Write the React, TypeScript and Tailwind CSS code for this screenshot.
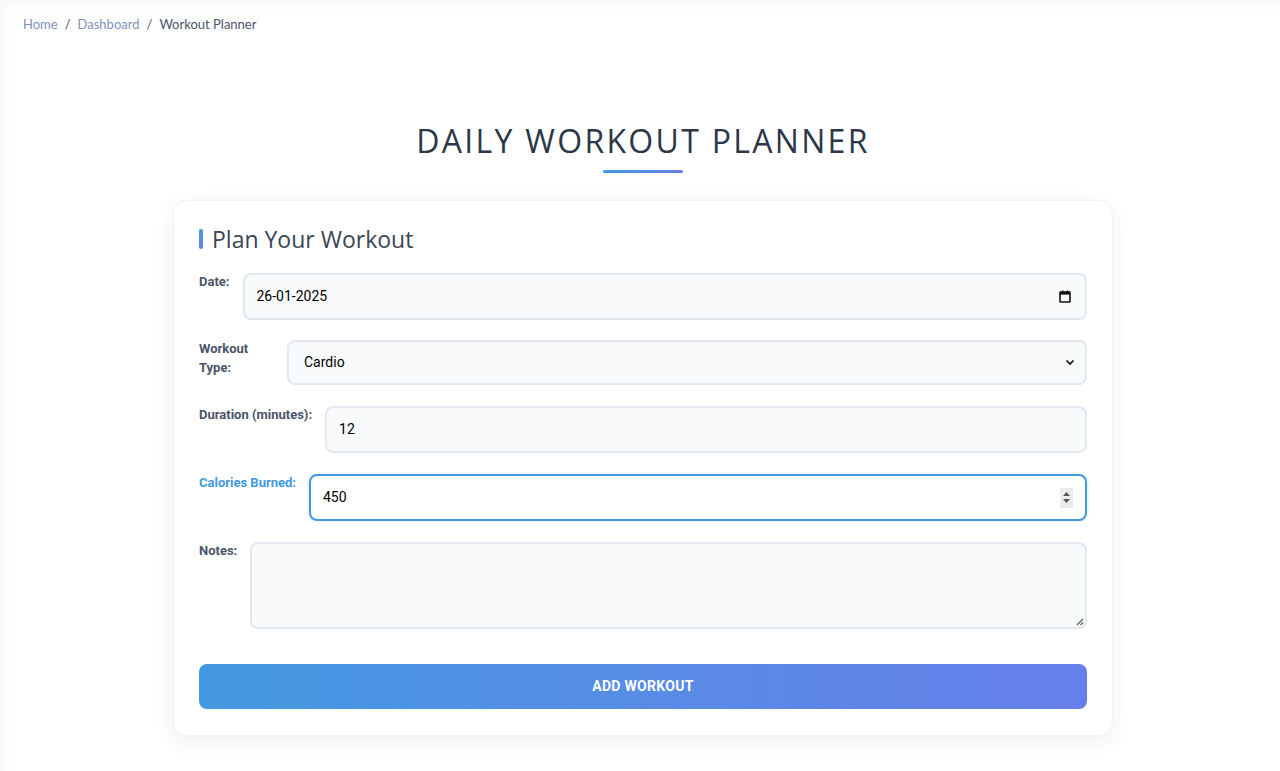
import React from 'react';

const labelCls =
  'shrink-0 mr-[13px] -mt-[1px] text-[13px] leading-[19px] font-bold text-[#4a5568]';
const fieldCls =
  'flex-1 min-w-0 h-[47px] rounded-lg border-2 border-[#e2e8f0] bg-[#f8fafc] px-[12px] text-[14px] text-black outline-none';

function CalendarIcon() {
  return (
    <svg width="12" height="13" viewBox="0 0 12 13" className="shrink-0">
      <rect x="1" y="2" width="10" height="10" rx="0.5" fill="none" stroke="#111" strokeWidth="1.6" />
      <rect x="1" y="2" width="10" height="2.6" fill="#111" />
      <rect x="3" y="0.5" width="1.4" height="2" fill="#111" />
      <rect x="7.6" y="0.5" width="1.4" height="2" fill="#111" />
    </svg>
  );
}

export default function App() {
  return (
    <div
      className="min-h-[771px] bg-white shadow-[inset_10px_10px_14px_-8px_rgba(30,41,80,0.05)]"
      style={{ fontFamily: 'Roboto, "Liberation Sans", sans-serif' }}
    >
      <nav
        className="flex items-center gap-[7px] px-[23px] pt-[15px] text-[13px] leading-[18px]"
        style={{ fontFamily: 'Lato, "Open Sans", sans-serif' }}
      >
        <span className="text-[#7f8fbd]">Home</span>
        <span className="text-[#4a5568]">/</span>
        <span className="text-[#7f8fbd]">Dashboard</span>
        <span className="text-[#4a5568]">/</span>
        <span className="text-[#4a5568]">Workout Planner</span>
      </nav>

      <div className="pl-[6px]">
        <div className="flex flex-col items-center pt-[88px]">
          <h1
            className="text-[32px] leading-[40px] font-normal tracking-[2.3px] text-[#2d3748]"
            style={{ fontFamily: '"Open Sans", Lato, sans-serif' }}
          >
            DAILY WORKOUT PLANNER
          </h1>
          <div className="mt-[9px] h-[3px] w-[80px] rounded-full bg-gradient-to-r from-[#4299e1] to-[#667eea]" />
        </div>

        <div className="mx-auto mt-[27px] w-[940px] rounded-[14px] border border-[#f1f3f7] bg-white px-[25px] pt-[23px] pb-[26px] shadow-[0_6px_20px_rgba(30,41,80,0.07)]">
          <div className="flex items-center">
            <div className="h-[20px] w-[4px] rounded-sm bg-gradient-to-b from-[#4299e1] to-[#667eea]" />
            <h2
              className="ml-[9px] text-[23px] leading-[30px] font-normal text-[#3a4656]"
              style={{ fontFamily: '"Open Sans", Lato, sans-serif' }}
            >
              Plan Your Workout
            </h2>
          </div>

          <div className="mt-[19px] flex flex-col gap-[20px]">
            <div className="flex items-start">
              <label className={labelCls}>Date:</label>
              <div className={fieldCls + ' flex items-center justify-between pr-[14px]'}>
                <span>26-01-2025</span>
                <CalendarIcon />
              </div>
            </div>

            <div className="flex items-start">
              <label className={labelCls + ' w-[75px]'}>Workout Type:</label>
              <div className={fieldCls + ' !h-[45px] flex items-center justify-between pl-[15px] pr-[10px]'}>
                <span>Cardio</span>
                <svg width="10" height="7" viewBox="0 0 10 7">
                  <path d="M1.5 1.5 L5 5 L8.5 1.5" fill="none" stroke="#111" strokeWidth="1.7" />
                </svg>
              </div>
            </div>

            <div className="mt-[1px] flex items-start">
              <label className={labelCls}>Duration (minutes):</label>
              <div className={fieldCls + ' flex items-center'}>
                <span>12</span>
              </div>
            </div>

            <div className="mt-[1px] flex items-start">
              <label className={labelCls + ' !text-[#4299e1]'}>Calories Burned:</label>
              <div className="flex h-[47px] min-w-0 flex-1 items-center justify-between rounded-lg border-2 border-[#4299e1] bg-white pl-[12px] pr-[12px] text-[14px] text-black shadow-[0_0_0_2px_rgba(66,153,225,0.08)]">
                <span>450</span>
                <div className="flex h-[20px] w-[13px] flex-col items-center justify-center gap-[3px] bg-[#ececec]">
                  <svg width="7" height="4" viewBox="0 0 7 4"><path d="M0 4 L3.5 0 L7 4Z" fill="#555" /></svg>
                  <svg width="7" height="4" viewBox="0 0 7 4"><path d="M0 0 L3.5 4 L7 0Z" fill="#555" /></svg>
                </div>
              </div>
            </div>

            <div className="mt-[1px] flex items-start">
              <label className={labelCls}>Notes:</label>
              <div className={fieldCls + ' !h-[87px] relative'}>
                <svg width="9" height="9" viewBox="0 0 9 9" className="absolute right-[1px] bottom-[1px]">
                  <path d="M8 2 L2 8 M8 5.5 L5.5 8" stroke="#555" strokeWidth="1.1" />
                </svg>
              </div>
            </div>
          </div>

          <button className="mt-[35px] flex h-[45px] w-full items-center justify-center rounded-lg bg-gradient-to-r from-[#4299e1] to-[#667eea] text-[14px] font-bold tracking-[0.3px] text-white">
            ADD WORKOUT
          </button>
        </div>
      </div>
    </div>
  );
}
